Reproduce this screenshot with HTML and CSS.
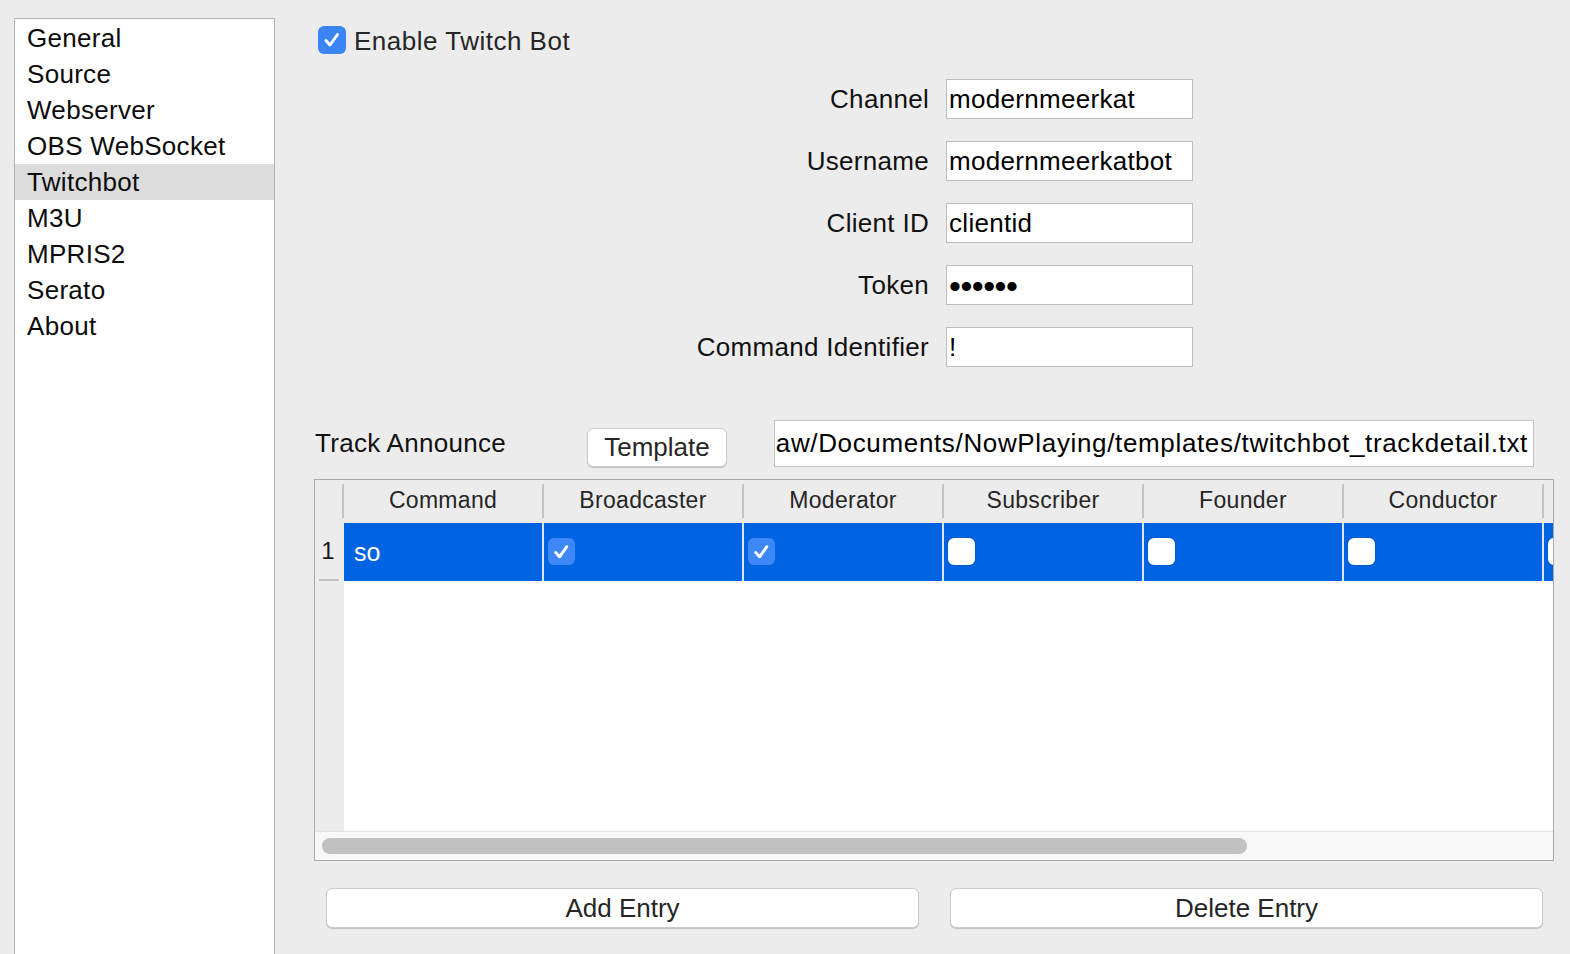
FILE: index.html
```html
<!DOCTYPE html>
<html>
<head>
<meta charset="utf-8">
<link rel="stylesheet" href="styles.css">
</head>
<body>
<div class="window">
  <ul class="sidebar">
    <li class="nav-item">General</li>
    <li class="nav-item">Source</li>
    <li class="nav-item">Webserver</li>
    <li class="nav-item">OBS WebSocket</li>
    <li class="nav-item selected">Twitchbot</li>
    <li class="nav-item">M3U</li>
    <li class="nav-item">MPRIS2</li>
    <li class="nav-item">Serato</li>
    <li class="nav-item">About</li>
  </ul>
  <main class="content">
    <label class="enable-row">
      <span class="cb cb-checked">
        <svg viewBox="0 0 28 28" width="28" height="28"><path d="M8 14.5 L12 19 L19.5 8.5" fill="none" stroke="#fff" stroke-width="3" stroke-linecap="round" stroke-linejoin="round"/></svg>
      </span>
      <span class="enable-text">Enable Twitch Bot</span>
    </label>

    <div class="form">
      <div class="form-label">Channel</div>
      <div class="input">modernmeerkat</div>
      <div class="form-label">Username</div>
      <div class="input">modernmeerkatbot</div>
      <div class="form-label">Client ID</div>
      <div class="input">clientid</div>
      <div class="form-label">Token</div>
      <div class="input dots">&#x2022;&#x2022;&#x2022;&#x2022;&#x2022;&#x2022;</div>
      <div class="form-label">Command Identifier</div>
      <div class="input">!</div>
    </div>

    <div class="announce-row">
      <div class="announce-label">Track Announce</div>
      <button class="btn template-btn">Template</button>
      <div class="path-input"><span class="path-text">aw/Documents/NowPlaying/templates/twitchbot_trackdetail.txt</span></div>
    </div>

    <div class="table">
      <div class="thead">
        <div class="corner"></div>
        <div class="th">Command</div>
        <div class="th">Broadcaster</div>
        <div class="th">Moderator</div>
        <div class="th">Subscriber</div>
        <div class="th">Founder</div>
        <div class="th">Conductor</div>
        <div class="th"></div>
      </div>
      <div class="tbody">
        <div class="rowheads">
          <div class="rowhead">1</div>
        </div>
        <div class="rows">
          <div class="tr">
            <div class="td td-text">so</div>
            <div class="td"><span class="cb cb-row-checked"><svg viewBox="0 0 28 28" width="28" height="28"><path d="M8 14.5 L12 19 L19.5 8.5" fill="none" stroke="#fff" stroke-width="3" stroke-linecap="round" stroke-linejoin="round"/></svg></span></div>
            <div class="td"><span class="cb cb-row-checked"><svg viewBox="0 0 28 28" width="28" height="28"><path d="M8 14.5 L12 19 L19.5 8.5" fill="none" stroke="#fff" stroke-width="3" stroke-linecap="round" stroke-linejoin="round"/></svg></span></div>
            <div class="td"><span class="cb cb-empty"></span></div>
            <div class="td"><span class="cb cb-empty"></span></div>
            <div class="td"><span class="cb cb-empty"></span></div>
            <div class="td"><span class="cb cb-empty"></span></div>
          </div>
        </div>
      </div>
      <div class="hscroll">
        <div class="thumb"></div>
      </div>
    </div>

    <div class="buttons">
      <button class="btn wide-btn">Add Entry</button>
      <button class="btn wide-btn">Delete Entry</button>
    </div>
  </main>
</div>
</body>
</html>
```
FILE: styles.css
```css
* { box-sizing: border-box; }
html, body {
  margin: 0;
  padding: 0;
  background: #ececec;
  overflow: hidden;
}
body {
  font-family: "Liberation Sans", Arial, sans-serif;
  font-size: 26px;
  color: #1a1a1a;
}
.window {
  display: flex;
  width: 1570px;
  height: 954px;
}
.sidebar {
  list-style: none;
  margin: 18px 0 0 14px;
  padding: 1px 0 0 0;
  width: 261px;
  height: 960px;
  background: #fff;
  border: 1px solid #b3b3b3;
  flex-shrink: 0;
}
.nav-item {
  height: 36px;
  line-height: 36px;
  padding-left: 12px;
  color: #0c0c0c;
  letter-spacing: 0.3px;
}
.nav-item.selected {
  background: #dcdcdc;
}
.content {
  margin-left: 39px;
  width: 1240px;
  display: flex;
  flex-direction: column;
}
.enable-row {
  display: flex;
  align-items: center;
  margin-top: 26px;
  margin-left: 4px;
  height: 28px;
  gap: 8px;
}
.cb {
  width: 28px;
  height: 28px;
  border-radius: 6px;
  display: inline-flex;
  flex-shrink: 0;
}
.cb-checked {
  background: #3a84f6;
}
.enable-text {
  color: #262626;
  letter-spacing: 0.5px;
  margin-top: 2px;
}
.form {
  display: grid;
  grid-template-columns: 615px 247px;
  column-gap: 17px;
  row-gap: 22px;
  margin-top: 25px;
}
.form-label {
  text-align: right;
  height: 40px;
  line-height: 40px;
  color: #111;
  letter-spacing: 0.3px;
}
.input {
  height: 40px;
  line-height: 38px;
  background: #fff;
  border: 1px solid #bdbdbd;
  padding-left: 2px;
  color: #000;
  white-space: nowrap;
  overflow: hidden;
  letter-spacing: 0.3px;
}
.input.dots {
  font-size: 34px;
  letter-spacing: -0.5px;
  line-height: 40px;
}
.announce-row {
  display: flex;
  align-items: center;
  margin-top: 53px;
  height: 47px;
}
.announce-label {
  width: 273px;
  padding-left: 1px;
  color: #111;
  letter-spacing: 0.3px;
  margin-top: -1px;
}
.btn {
  font-family: "Liberation Sans", Arial, sans-serif;
  font-size: 26px;
  color: #262626;
  background: #fff;
  border: 1px solid #cacaca;
  border-radius: 6px;
  box-shadow: 0 1px 1px rgba(0,0,0,0.18);
  padding: 0;
  cursor: default;
}
.template-btn {
  width: 140px;
  height: 39px;
  margin-top: 8px;
}
.path-input {
  margin-left: 47px;
  width: 760px;
  height: 47px;
  background: #fff;
  border: 1px solid #c4c4c4;
  display: flex;
  justify-content: flex-end;
  align-items: center;
  overflow: hidden;
  padding-right: 5px;
  white-space: nowrap;
  color: #000;
}
.path-text {
  flex-shrink: 0;
  letter-spacing: 0.65px;
}
.table {
  margin-top: 12px;
  width: 1240px;
  height: 382px;
  border: 1px solid #a9a9a9;
  display: flex;
  flex-direction: column;
  overflow: hidden;
  background: #ececec;
}
.thead {
  display: flex;
  height: 43px;
  flex-shrink: 0;
  background: #ececec;
}
.corner, .th {
  flex-shrink: 0;
  background-image: linear-gradient(#c4c4c4, #c4c4c4);
  background-repeat: no-repeat;
  background-size: 2px 34px;
  background-position: right 4px;
}
.corner {
  width: 29px;
}
.th {
  width: 200px;
  text-align: center;
  font-size: 23px;
  line-height: 40px;
  color: #262626;
  padding-right: 2px;
  letter-spacing: 0.3px;
}
.tbody {
  display: flex;
  flex: 1;
  min-height: 0;
}
.rowheads {
  width: 29px;
  flex-shrink: 0;
  background: #ececec;
}
.rowhead {
  height: 58px;
  line-height: 56px;
  font-size: 24px;
  text-align: center;
  padding-right: 7px;
  padding-left: 4px;
  color: #1a1a1a;
  background-image: linear-gradient(#c4c4c4, #c4c4c4);
  background-repeat: no-repeat;
  background-size: 20px 2px;
  background-position: 4px bottom;
}
.rows {
  flex: 1;
  background: #fff;
  overflow: hidden;
}
.tr {
  display: flex;
  height: 58px;
  background: #0063e1;
}
.td {
  width: 200px;
  flex-shrink: 0;
  border-right: 2px solid #dbe6fb;
  display: flex;
  align-items: center;
  padding-left: 4px;
}
.td-text {
  color: #fff;
  padding-left: 10px;
  font-size: 25px;
}
.cb-row-checked {
  background: #3d88f6;
  width: 27px;
  height: 27px;
  margin-top: -2px;
}
.cb-empty {
  background: #fff;
  width: 27px;
  height: 27px;
  margin-top: -2px;
  box-shadow: 0 0 0 1px rgba(0,0,0,0.08);
}
.hscroll {
  height: 29px;
  flex-shrink: 0;
  background: #f8f8f8;
  border-top: 1px solid #e3e3e3;
  padding: 6px 0 0 7px;
}
.thumb {
  width: 925px;
  height: 16px;
  border-radius: 8px;
  background: #c1c1c1;
}
.buttons {
  display: flex;
  gap: 31px;
  margin: 27px 11px 0 12px;
}
.wide-btn {
  flex: 1;
  height: 40px;
}
```
